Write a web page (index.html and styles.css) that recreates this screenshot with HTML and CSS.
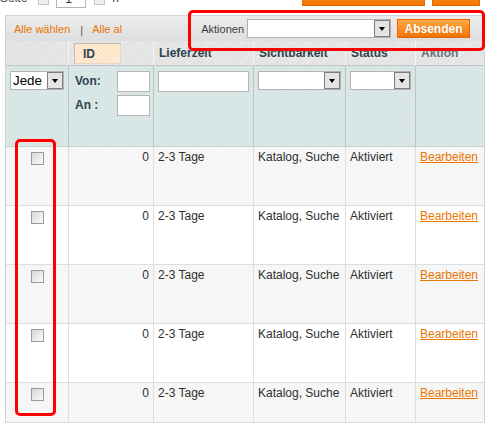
FILE: index.html
```html
<!DOCTYPE html>
<html lang="de">
<head>
<meta charset="utf-8">
<title>Versandzeiten</title>
<link rel="stylesheet" href="styles.css">
</head>
<body>
<div class="page">
  <div class="pager">
    <span class="pg-label">Seite</span>
    <span class="pg-box pg-prev"></span>
    <span class="pg-input">1</span>
    <span class="pg-box pg-next"></span>
    <span class="pg-label pg-of">n</span>
    <span class="btn btn-top btn-wide">Filter zurücksetzen</span>
    <span class="btn btn-top btn-narrow">Suche</span>
  </div>

  <div class="grid">
    <div class="massaction">
      <div class="ma-links">
        <a class="ma-link">Alle wählen</a>
        <span class="ma-sep">|</span>
        <a class="ma-link">Alle al</a>
      </div>
      <div class="ma-form">
        <span class="ma-label">Aktionen</span>
        <div class="sel sel-actions"><span class="sel-txt"></span><span class="sel-btn"></span></div>
        <span class="btn btn-submit">Absenden</span>
      </div>
    </div>

    <div class="tbl">
      <div class="cell h"></div>
      <div class="cell h"><span class="sort">ID</span></div>
      <div class="cell h">Lieferzeit</div>
      <div class="cell h">Sichtbarkeit</div>
      <div class="cell h">Status</div>
      <div class="cell h h-off">Aktion</div>

      <div class="cell f"><div class="sel"><span class="sel-txt">Jede</span><span class="sel-btn"></span></div></div>
      <div class="cell f f-range">
        <div class="range-row"><span class="range-lbl">Von:</span><span class="inp inp-small"></span></div>
        <div class="range-row"><span class="range-lbl">An :</span><span class="inp inp-small"></span></div>
      </div>
      <div class="cell f"><span class="inp inp-full"></span></div>
      <div class="cell f"><div class="sel"><span class="sel-txt"></span><span class="sel-btn"></span></div></div>
      <div class="cell f"><div class="sel"><span class="sel-txt"></span><span class="sel-btn"></span></div></div>
      <div class="cell f"></div>

      <div class="cell d odd c-cb"><span class="cb"></span></div>
      <div class="cell d odd num">0</div>
      <div class="cell d odd">2-3 Tage</div>
      <div class="cell d odd">Katalog, Suche</div>
      <div class="cell d odd">Aktiviert</div>
      <div class="cell d odd"><a class="edit">Bearbeiten</a></div>

      <div class="cell d c-cb"><span class="cb"></span></div>
      <div class="cell d num">0</div>
      <div class="cell d">2-3 Tage</div>
      <div class="cell d">Katalog, Suche</div>
      <div class="cell d">Aktiviert</div>
      <div class="cell d"><a class="edit">Bearbeiten</a></div>

      <div class="cell d odd c-cb"><span class="cb"></span></div>
      <div class="cell d odd num">0</div>
      <div class="cell d odd">2-3 Tage</div>
      <div class="cell d odd">Katalog, Suche</div>
      <div class="cell d odd">Aktiviert</div>
      <div class="cell d odd"><a class="edit">Bearbeiten</a></div>

      <div class="cell d c-cb"><span class="cb"></span></div>
      <div class="cell d num">0</div>
      <div class="cell d">2-3 Tage</div>
      <div class="cell d">Katalog, Suche</div>
      <div class="cell d">Aktiviert</div>
      <div class="cell d"><a class="edit">Bearbeiten</a></div>

      <div class="cell d odd last c-cb"><span class="cb"></span></div>
      <div class="cell d odd last num">0</div>
      <div class="cell d odd last">2-3 Tage</div>
      <div class="cell d odd last">Katalog, Suche</div>
      <div class="cell d odd last">Aktiviert</div>
      <div class="cell d odd last"><a class="edit">Bearbeiten</a></div>
    </div>
  </div>

  <div class="hl hl-actions"></div>
  <div class="hl hl-checks"></div>
</div>
</body>
</html>
```

FILE: styles.css
```css
html, body {
  margin: 0;
  padding: 0;
  background: #ffffff;
}
body {
  font-family: "Liberation Sans", Arial, sans-serif;
  font-size: 12px;
  color: #2f2f2f;
}
.page {
  position: relative;
  width: 492px;
  height: 425px;
  overflow: hidden;
}

/* top pager row (mostly scrolled out of view) */
.pager {
  display: flex;
  align-items: flex-end;
  height: 8px;
  margin-bottom: 7px;
  padding-right: 12px;
}
.pg-label {
  line-height: 14px;
  margin-bottom: 3px;
  color: #444;
}
.pg-box {
  width: 11px;
  height: 14px;
  box-sizing: border-box;
  border: 1px solid #c8c8c8;
  background: #eeeeee;
  margin-bottom: 3px;
}
.pg-prev { margin-left: 11px; }
.pg-input {
  width: 30px;
  height: 18px;
  margin-left: 7px;
  border: 1px solid #b4b4b4;
  background: #fff;
  padding-left: 8px;
  box-sizing: border-box;
  line-height: 16px;
  font-size: 12px;
}
.pg-next { margin-left: 8px; }
.pg-of { margin-left: 7px; }

.btn {
  display: inline-flex;
  align-items: center;
  justify-content: center;
  box-sizing: border-box;
  border: 1px solid #ed6502;
  background: linear-gradient(#ffab45, #f27400);
  color: #ffffff;
  font-weight: bold;
  font-size: 12px;
  white-space: nowrap;
}
.btn-top {
  height: 20px;
  margin-bottom: 2px;
}
.btn-wide {
  width: 123px;
  margin-left: auto;
}
.btn-narrow {
  width: 48px;
  margin-left: 7px;
}

/* grid */
.grid {
  margin-left: 5px;
  width: 480px;
}
.massaction {
  display: flex;
  align-items: center;
  justify-content: space-between;
  height: 26px;
  box-sizing: border-box;
  border: 1px solid #d3d3d3;
  border-bottom: 0;
  background: linear-gradient(#ececec, #dedede);
  padding: 0 14px 0 8px;
}
.ma-links {
  display: flex;
  align-items: center;
  font-size: 11px;
}
.ma-link {
  color: #ea7601;
}
.ma-sep {
  color: #555;
  margin: 2px 9px 0 10px;
}
.ma-form {
  display: flex;
  align-items: center;
}
.ma-label {
  font-size: 11px;
  color: #3a3a3a;
  margin-right: 3px;
}
.sel-actions {
  width: 144px;
}
.btn-submit {
  width: 73px;
  height: 19px;
  margin-left: 6px;
  font-size: 12px;
  text-shadow: 0 0 1px rgba(160, 60, 0, 0.4);
}

/* selects & inputs */
.sel {
  display: flex;
  height: 19px;
  box-sizing: border-box;
  border: 1px solid #b2b2b2;
  background: #ffffff;
}
.sel-txt {
  flex: 1;
  padding-left: 2px;
  font-size: 13.33px;
  line-height: 17px;
  color: #000;
  overflow: hidden;
}
.sel-btn {
  position: relative;
  width: 16px;
  box-sizing: border-box;
  border: 1px solid #7e7e7e;
  background: #e4e4e4;
}
.sel-btn::after {
  content: "";
  position: absolute;
  left: 4px;
  top: 6px;
  border-left: 3.5px solid transparent;
  border-right: 3.5px solid transparent;
  border-top: 4px solid #000;
}
.inp {
  display: block;
  height: 21px;
  box-sizing: border-box;
  border: 1px solid #b6b6b6;
  background: #ffffff;
}
.inp-small {
  width: 33px;
}
.inp-full {
  width: 100%;
}

/* table */
.tbl {
  display: grid;
  grid-template-columns: 63px 85px 100px 92px 70px 69px;
  border-left: 1px solid #cfd4d5;
}
.cell {
  box-sizing: border-box;
  border-right: 1px solid #dadfe0;
  border-bottom: 1px solid #dadfe0;
}
.cell:nth-child(6n) {
  border-right-color: #cfd4d5;
}
.h {
  height: 25px;
  display: flex;
  align-items: center;
  padding-left: 5px;
  font-weight: bold;
  color: #2d444f;
  background: repeating-linear-gradient(135deg, #e2e2e2 0 2px, #ebebeb 2px 3px);
  border-right: 1px solid #f4f4f4;
  border-bottom: 1px solid #c4c4c4;
}
.h-off {
  color: #67767e;
}
.sort {
  display: flex;
  align-items: center;
  width: 47px;
  height: 21px;
  box-sizing: border-box;
  margin-top: 1px;
  padding-left: 8px;
  border: 1px solid #c4bcb3;
  border-right-color: #e6d8c6;
  border-bottom-color: #e6d8c6;
  background: repeating-linear-gradient(135deg, #fbe3c4 0 2px, #fdf0df 2px 3px);
}
.f {
  height: 81px;
  padding: 5px 4px;
  background-color: #d8e5e5;
  background-image: radial-gradient(circle, #e3eded 0.6px, transparent 0.8px);
  background-size: 3px 3px;
  border-right: 1px solid #bcc4c4;
  border-bottom: 1px solid #c8d0d0;
}
.f-range {
  padding: 5px 3px 5px 6px;
  display: flex;
  flex-direction: column;
  gap: 3px;
}
.range-row {
  display: flex;
  justify-content: space-between;
  align-items: center;
}
.range-lbl {
  font-weight: bold;
  color: #2d444f;
  margin-top: -2px;
}
.d {
  height: 59px;
  padding: 2px 4px;
  line-height: 16px;
  background: #ffffff;
  white-space: nowrap;
}
.d.odd {
  background: #f6f6f6;
}
.d.last {
  height: 40px;
}
.num {
  text-align: right;
}
.c-cb {
  display: flex;
  justify-content: center;
  padding-top: 5px;
}
.cb {
  width: 13px;
  height: 13px;
  box-sizing: border-box;
  border: 1px solid #9a9a9a;
  background: linear-gradient(135deg, #d6d6d6, #fbfbfb);
}
.edit {
  color: #ea7601;
  text-decoration: underline;
}

/* red annotation boxes */
.hl {
  position: absolute;
  box-sizing: border-box;
  border: 3px solid #ff0000;
  border-radius: 5px;
}
.hl-actions {
  left: 188px;
  top: 10px;
  width: 297px;
  height: 41px;
}
.hl-checks {
  left: 15px;
  top: 139px;
  width: 41px;
  height: 277px;
}
```
